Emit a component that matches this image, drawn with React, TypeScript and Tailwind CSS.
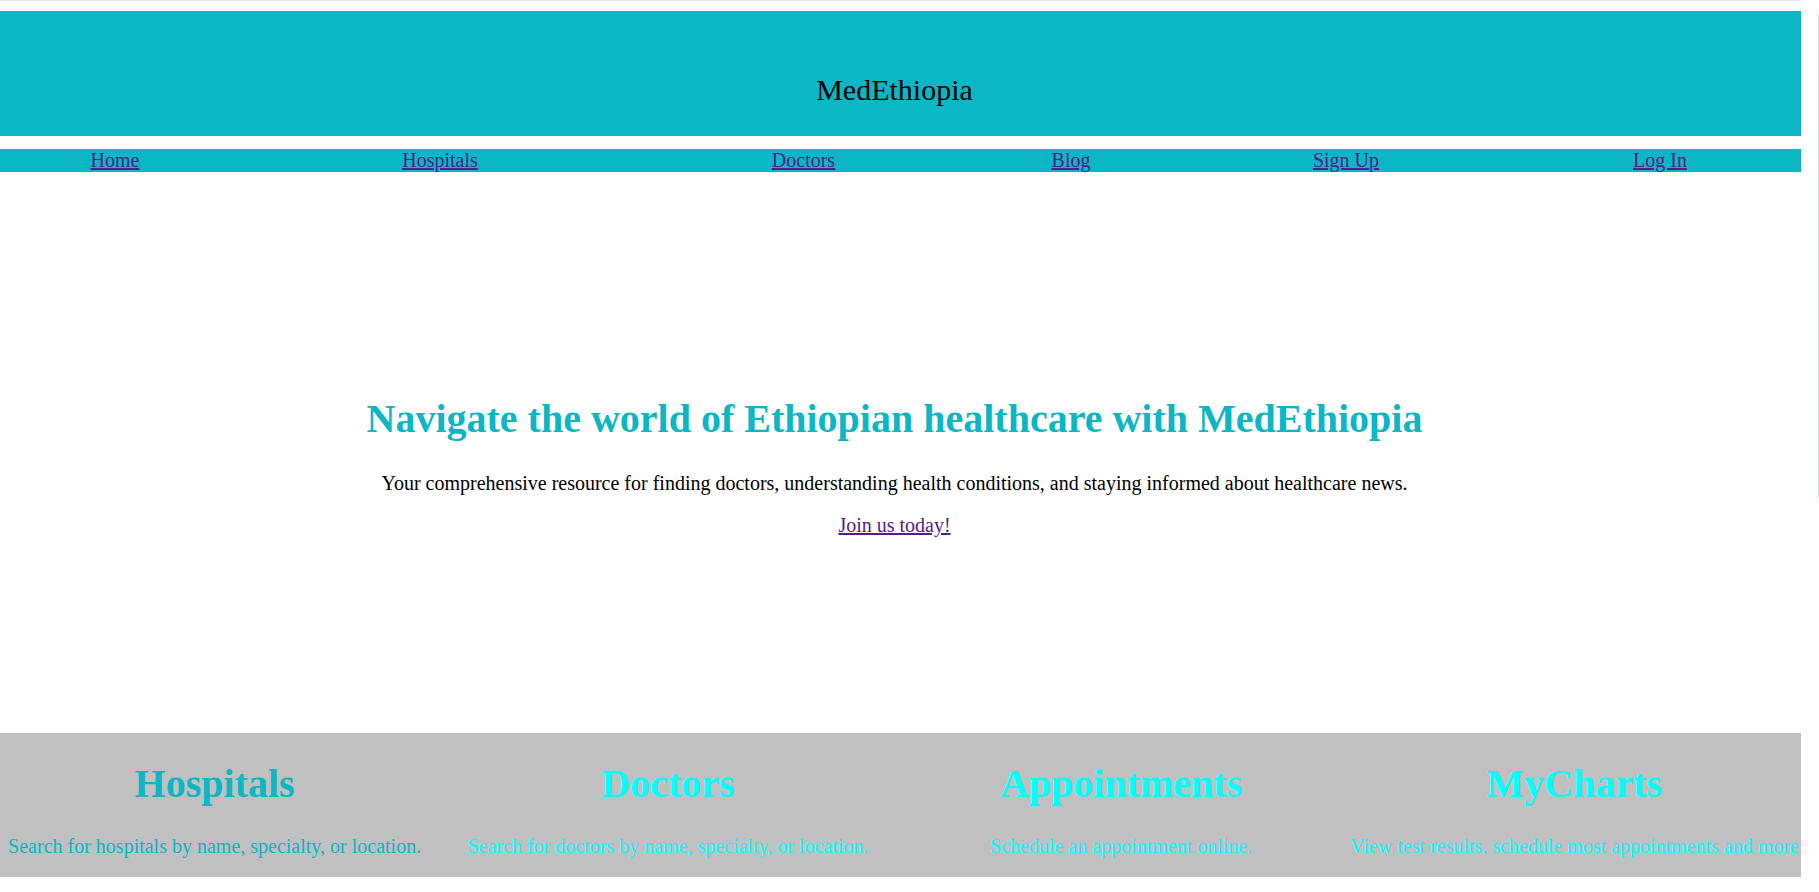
const teal = '#0bb6c5';

const navLinks = [
  { label: 'Home', grow: 'grow-[254]' },
  { label: 'Hospitals', grow: 'grow-[396]' },
  { label: 'Doctors', grow: 'grow-[331]' },
  { label: 'Blog', grow: 'grow-[204]' },
  { label: 'Sign Up', grow: 'grow-[346]' },
  { label: 'Log In', grow: 'grow-[282]' },
];

const features = [
  { title: 'Hospitals', text: 'Search for hospitals by name, specialty, or location.', color: 'text-[#0bb6c5]' },
  { title: 'Doctors', text: 'Search for doctors by name, specialty, or location.', color: 'text-[#00ffff]' },
  { title: 'Appointments', text: 'Schedule an appointment online.', color: 'text-[#00ffff]' },
  { title: 'MyCharts', text: 'View test results, schedule most appointments and more', color: 'text-[#00ffff]' },
];

export default function App() {
  return (
    <div className="relative min-h-[892px] bg-white font-['Liberation_Serif','Times_New_Roman',serif] text-black">
      {/* thin frame lines from the original capture */}
      <div className="h-px w-[1801px] bg-[#e6e6e6]" />
      <div className="absolute right-0 top-[14px] h-[484px] w-px bg-[#d3dde6]" />

      <div className="-ml-3 w-[1813px] pt-[10px]">
        <header className="bg-[#0bb6c5] pt-[62px] pb-[30px] text-center">
          <h1 className="text-[30px] leading-[33px] font-normal">MedEthiopia</h1>
        </header>

        <nav className="mt-[13px] flex bg-[#0bb6c5] text-[20px] leading-[23px]">
          {navLinks.map((link) => (
            <div key={link.label} className={`${link.grow} basis-0 text-center`}>
              <a href="#" className="text-[#551a8b] underline">
                {link.label}
              </a>
            </div>
          ))}
        </nav>

        <section className="pt-[225px] pb-[197px] text-center">
          <h2 className="mb-[31px] text-[40px] leading-[44px] font-bold" style={{ color: teal }}>
            Navigate the world of Ethiopian healthcare with MedEthiopia
          </h2>
          <p className="text-[20px] leading-[22px]">
            Your comprehensive resource for finding doctors, understanding health conditions, and staying informed about healthcare news.
          </p>
          <p className="mt-[20px] text-[20px] leading-[22px]">
            <a href="#" className="text-[#551a8b] underline">
              Join us today!
            </a>
          </p>
        </section>

        <section className="grid grid-cols-4 bg-[#c0c0c0] text-center">
          {features.map((f) => (
            <div key={f.title} className={`${f.color} pt-[29px] pb-[20px] whitespace-nowrap`}>
              <h3 className="mb-[29px] text-[40px] leading-[44px] font-bold">{f.title}</h3>
              <p className="text-[20px] leading-[22px]">{f.text}</p>
            </div>
          ))}
        </section>
      </div>
    </div>
  );
}
